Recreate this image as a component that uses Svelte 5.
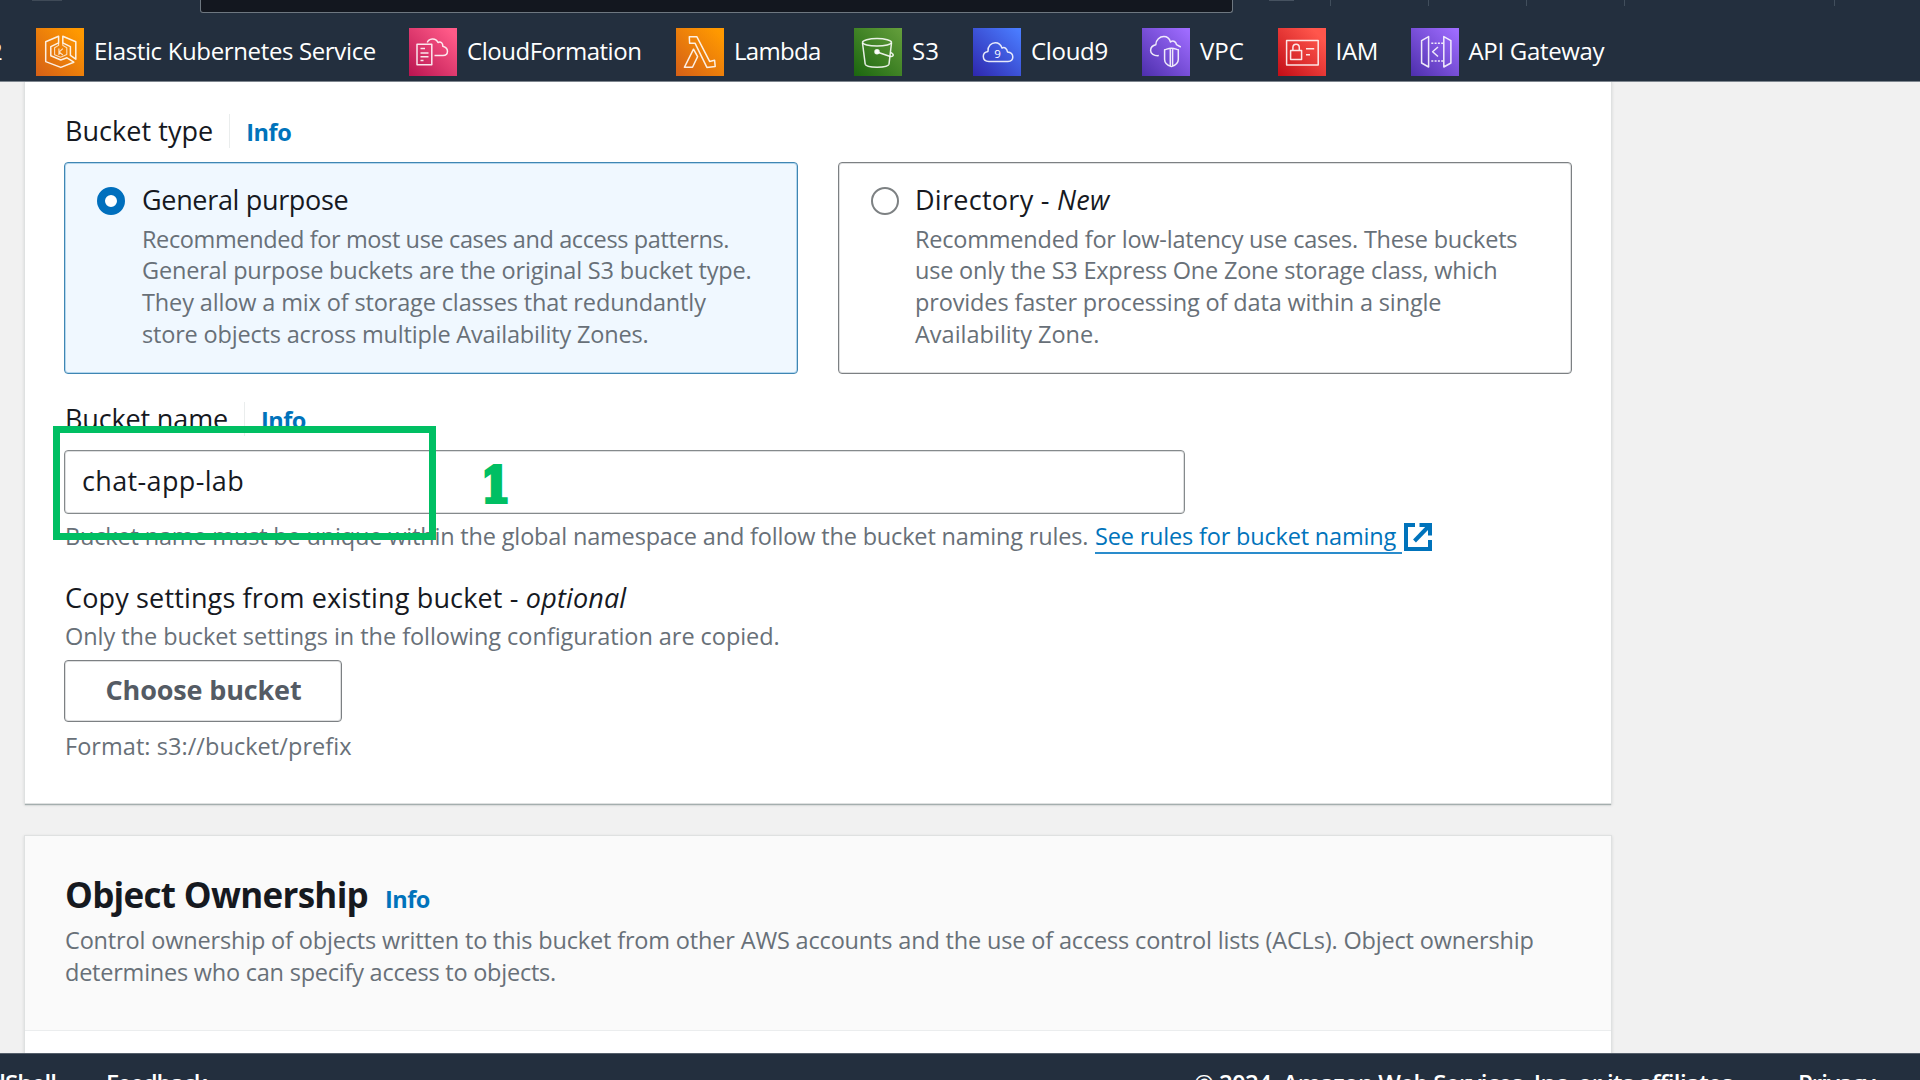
<script>
  const services = [
    { id: 'eks', name: 'Elastic Kubernetes Service', width: 373 },
    { id: 'cfn', name: 'CloudFormation', width: 267 },
    { id: 'lambda', name: 'Lambda', width: 178 },
    { id: 's3', name: 'S3', width: 119 },
    { id: 'cloud9', name: 'Cloud9', width: 169 },
    { id: 'vpc', name: 'VPC', width: 135.5 },
    { id: 'iam', name: 'IAM', width: 133 },
    { id: 'api', name: 'API Gateway', width: 220 }
  ];
</script>

{#snippet glyph(id)}
  <svg viewBox="0 0 48 48" class="glyph">
    {#if id === 'eks'}
      <path d="M22.6 8.3 9.7 13.8V33.6L24.8 39.4 37.8 34.2 31 29.8 24.8 32 14.8 27.8V18.6L22.6 14.8Z" />
      <path d="M26.8 8.3 39.8 13.8V31.2L34.4 27.4V18.6L26.8 14.8Z" />
      <path d="M22.6 15V17.4L18.6 19.8V26.8L24.6 29.2 30.8 26.6V19.8L26.8 17.4V15" class="thin" />
      <path d="M22.9 20.6v6.4M26.9 20.6l-3.8 3.4 3.8 3" class="thin" />
    {:else if id === 'cfn'}
      <path d="M8 16.3H22.8V36.8H8Z" />
      <path d="M11.5 20.5h4.5M11.5 25h8M11.5 28.8h8M11.5 32.5h3" />
      <path d="M18.3 14.5C19.5 10.5 26.5 9 29 14.5 32 13 34 15.5 33.8 18.2 40.5 20 39.5 27.5 34 27.5H25.5" />
    {:else if id === 'lambda'}
      <path d="M13.3 8.7H20.8L33.6 33.4 38.6 32.2 39.2 38.6 30.9 39.4 19 15.2H13.6Z" />
      <path d="M8.4 39.3 17.5 21.2 21.6 28.6 16.5 39.3Z" />
    {:else if id === 's3'}
      <ellipse cx="23" cy="14.3" rx="14.5" ry="3.7" />
      <path d="M8.5 15 11.2 36.2C12 40.3 34.2 40.3 35 36.2L37.5 15" />
      <circle cx="23" cy="23.8" r="2" class="solid" />
      <path d="M24.5 24.5 34.8 28C40 29.6 40.6 26.4 36.6 24.4" />
    {:else if id === 'cloud9'}
      <path d="M16 33.4C12 33.4 10.3 31 10.3 28.2 10.3 25.5 12.5 23.8 15 23.4 14.5 18 18.5 14.7 22.3 14.7 26 14.7 28 17 29 20 32 18.7 34 20.8 34.5 24 38 24.3 39.8 26.5 39.8 29 39.8 32 37.5 33.4 35 33.4Z" />
      <text x="24.6" y="29.6">9</text>
    {:else if id === 'vpc'}
      <path d="M16.8 27.6C12 28.2 8.4 25.5 8.6 22.2 8.8 19 11 17.4 13.8 16.8 13.8 11.5 18 8.6 21.8 8.6 25.5 8.6 27.5 10.8 28.5 14 31.5 11.8 34 14 34.5 16.6L38.8 19" />
      <path d="M29.4 20.2C26 20.2 24.6 21.5 22.6 21.8V31.5C22.6 35 25.5 37.3 29.4 38.6 33.3 37.3 36.3 35 36.3 31.5V21.8C34.3 21.5 32.8 20.2 29.4 20.2ZM28.3 21V37.5M30.6 21V37.5" />
    {:else if id === 'iam'}
      <path d="M8.6 12.6H40.2V37H8.6ZM12.6 22.5H23.6V31.4H12.6ZM14.9 22.3V19.6C14.9 15.2 21.3 15.2 21.3 19.6V22.3M28 20.7H36.2M28 26.8H32" />
    {:else}
      <path d="M17.6 8.6 10.6 12.6V35L17.6 39ZM32.8 8.6 39.9 12.6V35L32.8 39ZM27 19 21.6 23.8 27 28.5" />
      <path d="M20.3 15.2H32M20.3 33H32" class="dotted" />
    {/if}
  </svg>
{/snippet}

<div class="page">
  <header>
    <div class="top">
      <span class="logo"></span>
      <div class="search"></div>
      <div class="tools"><i></i><i></i><i></i><i></i><i></i></div>
    </div>
    <nav>
      <span class="clipped">EC2</span>
      {#each services as s}
        <a class="service {s.id}" style:width="{s.width}px">
          <span class="badge">{@render glyph(s.id)}</span>
          <span class="name">{s.name}</span>
        </a>
      {/each}
    </nav>
  </header>

  <main>
    <section class="card general">
      <div class="label-row">
        <span class="label">Bucket type</span><b class="bar"></b><a class="info">Info</a>
      </div>
      <div class="tiles">
        <div class="tile selected">
          <span class="radio"></span>
          <div>
            <div class="label gp">General purpose</div>
            <div class="desc">
              <div class="l1">Recommended for most use cases and access patterns.</div>
              <div>General purpose buckets are the original S3 bucket type.</div>
              <div class="l3">They allow a mix of storage classes that redundantly</div>
              <div>store objects across multiple Availability Zones.</div>
            </div>
          </div>
        </div>
        <div class="tile directory">
          <span class="radio"></span>
          <div>
            <div class="label">Directory - <em>New</em></div>
            <div class="desc">
              <div>Recommended for low-latency use cases. These buckets</div>
              <div>use only the S3 Express One Zone storage class, which</div>
              <div class="l3">provides faster processing of data within a single</div>
              <div class="last">Availability Zone.</div>
            </div>
          </div>
        </div>
      </div>

      <div class="label-row name-row">
        <span class="label">Bucket name</span><b class="bar"></b><a class="info">Info</a>
      </div>
      <div class="input">chat-app-lab</div>
      <div class="desc hint">
        <span>Bucket name must be unique within the global namespace and follow the bucket naming rules.</span>
        <a class="link">See rules for bucket naming</a>
        <svg class="external" viewBox="0 0 28 28"><path d="M11 2H2V26H26V17" /><path d="M10.5 18 25 3" /><path d="M15.5 2H26V12.5" /></svg>
      </div>

      <div class="label copy">Copy settings from existing bucket - <em>optional</em></div>
      <div class="desc only">Only the bucket settings in the following configuration are copied.</div>
      <button>Choose bucket</button>
      <div class="desc format">Format: s3://bucket/prefix</div>

      <div class="marker"></div>
      <div class="step">1</div>
    </section>

    <section class="card">
      <div class="card-head">
        <h2>Object Ownership <a class="info">Info</a></h2>
        <div class="desc">
          <div class="long">Control ownership of objects written to this bucket from other AWS accounts and the use of access control lists (ACLs). Object ownership</div>
          <div>determines who can specify access to objects.</div>
        </div>
      </div>
    </section>
  </main>

  <footer>
    <span class="shell">CloudShell</span>
    <span class="feedback">Feedback</span>
    <span class="copyright">© 2024, Amazon Web Services, Inc. or its affiliates.</span>
    <span class="privacy">Privacy</span>
  </footer>
</div>

<style>
  :global(body) { margin: 0; overflow: hidden; }
  .page {
    width: 1920px; height: 1080px; overflow: hidden; display: flex; flex-direction: column;
    background: #f1f1f1; color: #16191f; font-family: "Open Sans", "Noto Sans", sans-serif;
    white-space: nowrap;
  }
  header { flex: none; height: 82px; background: #232f3e; border-bottom: 1px solid #7d858e; box-sizing: border-box; overflow: hidden; }
  .top { display: flex; height: 28px; align-items: flex-start; }
  .logo { width: 30px; height: 1px; margin: 0 138px 0 32px; background: #3f4a57; }
  .search { width: 1031px; height: 12px; background: #13171f; border: 1px solid #6e7780; border-top: 0; border-radius: 0 0 3px 3px; }
  .tools { display: flex; margin-left: 36px; width: 566px; height: 6px; background: linear-gradient(#465260, #465260) 0 0 / 25px 1px no-repeat; }
  .tools i { width: 1px; height: 6px; background: #414e5c; margin-left: 61px; }
  .tools i + i { margin-left: 97px; }
  .tools i:last-child { margin-left: 209px; }
  nav { display: flex; height: 48px; align-items: center; color: #fff; font-size: 24px; letter-spacing: -0.32px; }
  .clipped { width: 36px; display: flex; justify-content: flex-end; box-sizing: border-box; padding-right: 33.5px; flex: none; }
  .clipped, .name { line-height: 33px; margin-top: -3px; }
  .service { display: flex; flex: none; align-items: center; gap: 10px; }
  .badge { width: 48px; height: 48px; flex: none; }
  .glyph { display: block; width: 48px; height: 48px; fill: none; stroke: #fff; stroke-width: 1.5; stroke-opacity: .88; stroke-linejoin: round; }
  .glyph text { font: 11.5px "Open Sans", sans-serif; fill: #fff; stroke: none; text-anchor: middle; letter-spacing: 0; }
  .thin { stroke-width: 1.1; stroke-opacity: .75; }
  .solid { fill: #fff; }
  .dotted { stroke-dasharray: 2 1.3; }
  .eks .badge, .lambda .badge { background: linear-gradient(45deg, #d45f17, #ff9900 90%); }
  .eks .name { letter-spacing: -.36px; }
  .cfn .badge { background: linear-gradient(45deg, #b81450, #ff5a88 90%); }
  .cfn .name { letter-spacing: -.47px; }
  .lambda .name { letter-spacing: -.7px; }
  .s3 .badge { background: linear-gradient(45deg, #1b660f, #659f3c); }
  .s3 .name { letter-spacing: .2px; }
  .cloud9 .badge { background: linear-gradient(45deg, #2e27ad, #4a7cff 95%); }
  .vpc .badge, .api .badge { background: linear-gradient(45deg, #4d2fac, #9f6cff 95%); }
  .vpc .name { letter-spacing: 0; }
  .iam .badge { background: linear-gradient(45deg, #c20d16, #ff564c 85%); }

  main { height: 971px; flex: none; overflow: hidden; padding-left: 25px; display: flex; flex-direction: column; gap: 33px; }
  .card { width: 1586px; flex: none; background: #fff; box-shadow: 0 0 0 1px #dfe1e1, 0 2px 1px #a4aeae, 0 1px 3px 1px rgba(0, 28, 36, .12); }
  .general { position: relative; box-sizing: border-box; height: 721px; padding: 31px 39px 0; }
  .label { font-size: 27px; line-height: 36px; }
  .label-row { display: flex; height: 36px; align-items: baseline; padding-left: 1px; letter-spacing: .05px; }
  .bar { width: 1px; height: 34px; background: #eaeded; align-self: center; margin: 0 16px 0 16px; }
  .info { color: #0073bb; font-size: 23.5px; font-weight: 700; letter-spacing: -.5px; }
  .tiles { display: grid; grid-template-columns: 734px 734px; column-gap: 40px; margin-top: 13px; }
  .tile { box-sizing: border-box; height: 212px; border: 1px solid #7c8083; border-radius: 4px; box-shadow: inset 0 0 0 1px rgba(90, 95, 99, .2); padding: 18px 0 0 32px; display: flex; gap: 16px; }
  .tile.directory { gap: 15px; }
  .tile.selected { background: #f0f8ff; border-color: #3f86b3; box-shadow: inset 0 0 0 1px rgba(0, 115, 187, .25); }
  .radio { width: 28px; height: 28px; box-sizing: border-box; border: 2px solid #7d8183; border-radius: 50%; margin: 6px 1px 0 0; background: #fff; flex: none; }
  .selected .radio { border: 8.5px solid #006fbd; }
  .tile .label { letter-spacing: .28px; padding-top: .5px; }
  .tile .gp { letter-spacing: -.33px; }
  .desc { color: #687078; font-size: 23.5px; line-height: 31.7px; letter-spacing: -.18px; }
  .tile .desc { margin-top: 6px; }
  .directory .desc { letter-spacing: -.21px; }
  .directory .last { letter-spacing: 0; }
  .tile .l1 { letter-spacing: -.38px; }
  .tile .l3 { letter-spacing: -.14px; }
  .name-row { margin-top: 27px; letter-spacing: -.15px; }
  .input { box-sizing: border-box; width: 1121px; height: 64px; margin-top: 13px; border: 1px solid #858a8c; border-radius: 4px; box-shadow: inset 0 0 0 1px rgba(90, 95, 99, .2); padding-left: 17px; font-size: 27px; line-height: 60px; letter-spacing: .35px; }
  .hint { display: flex; margin-top: 7px; padding-left: 1px; }
  .hint span { letter-spacing: -.17px; width: 1030px; flex: none; }
  .link { color: #0073bb; letter-spacing: -.18px; width: 307px; height: 31px; border-bottom: 2px solid #2a8ccc; line-height: 31.7px; }
  .external { width: 28px; height: 28px; margin: 2px 0 0 2px; fill: none; stroke: #0073bb; stroke-width: 4; }
  .copy { margin-top: 26px; padding-left: 1px; letter-spacing: .15px; }
  .only { margin-top: 5px; padding-left: 1px; letter-spacing: -.05px; }
  button { display: block; box-sizing: border-box; width: 278px; height: 62px; margin-top: 7px; padding: 0 0 2px 1px; border: 1px solid #7c8083; border-radius: 4px; box-shadow: inset 0 0 0 1px rgba(90, 95, 99, .2); background: #fff; color: #545b64; font: 700 27px "Open Sans", sans-serif; letter-spacing: -.15px; }
  .format { margin-top: 9px; padding-left: 1px; letter-spacing: .05px; }
  .marker { position: absolute; left: 27.5px; top: 344px; width: 383px; height: 114px; box-sizing: border-box; border: 7px solid #00bf63; }
  .step { position: absolute; left: 453.5px; top: 372.5px; font: 700 48px/60px "DejaVu Serif", serif; color: #00bf63; -webkit-text-stroke: 4px #00bf63; transform: scaleX(.86); }

  .card-head { box-sizing: border-box; height: 194.5px; padding: 35px 39px 0 40px; background: #fafafa; border-bottom: 1px solid #ebedee; }
  .card:last-child { height: 300px; }
  h2 { margin: 0; font-size: 35px; line-height: 48px; letter-spacing: -.7px; height: 48px; }
  h2 .info { margin-left: 8.5px; }
  .card-head .desc { margin-top: 6px; }
  .card-head .desc div { letter-spacing: -.23px; }
  .card-head .desc .long { letter-spacing: -.165px; }

  footer { flex: none; height: 27px; overflow: hidden; box-sizing: border-box; background: #232f3e; border-top: 1px solid #555f6b; color: #fff; font-size: 24px; font-weight: 600; letter-spacing: -.95px; line-height: 34px; padding-top: 12px; display: flex; }
  .shell { width: 56px; display: flex; justify-content: flex-end; flex: none; }
  .feedback { margin-left: 50px; width: 1088px; flex: none; letter-spacing: -1.2px; }
  .copyright { width: 604px; flex: none; letter-spacing: -.66px; }
</style>
